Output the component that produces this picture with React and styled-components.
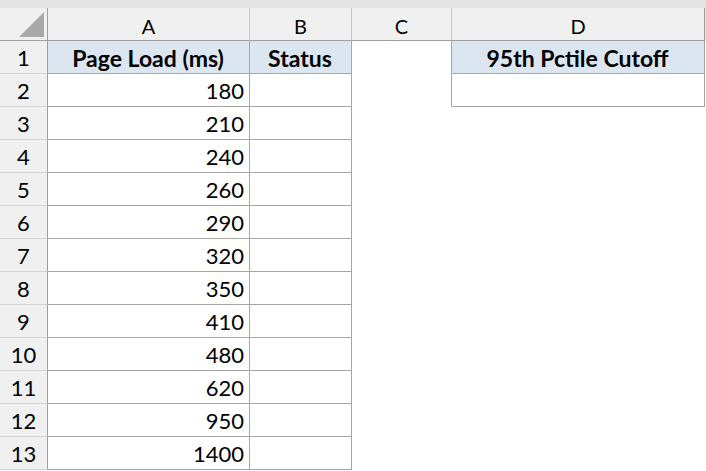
import React from 'react';
import styled, { createGlobalStyle } from 'styled-components';

const GlobalStyle = createGlobalStyle`
  html, body {
    margin: 0;
    padding: 0;
    background: #ffffff;
    overflow: hidden;
  }
  body {
    font-family: Lato, "Noto Sans", sans-serif;
    color: #000000;
  }
`

const loads = [180, 210, 240, 260, 290, 320, 350, 410, 480, 620, 950, 1400]
const columns = ['A', 'B', 'C', 'D']

const Page = styled.div`
  width: 706px;
  height: 471px;
  background: #ffffff;
`

const TopStrip = styled.div`
  height: 8px;
  background: #e3e3e3;
`

const Sheet = styled.div`
  display: grid;
  grid-template-columns: 48px 202px 102px 100px 253px 1px;
  grid-template-rows: 33px repeat(13, 33px);
`

const Corner = styled.div`
  position: relative;
  box-sizing: border-box;
  background: #f0f0f0;
  border-right: 1px solid #9f9f9f;
  border-bottom: 1px solid #9f9f9f;

  svg {
    position: absolute;
    left: 19px;
    top: 4px;
  }
`

const ColHeader = styled.div`
  box-sizing: border-box;
  background: #f0f0f0;
  border-right: 1px solid ${p => (p.$last ? '#9f9f9f' : '#c9c9c9')};
  border-bottom: 1px solid #9f9f9f;
  display: flex;
  align-items: center;
  justify-content: center;
  padding-top: 3px;
  font-size: 20px;
`

const Filler = styled.div`
  background: ${p => (p.$head ? '#e3e3e3' : '#ffffff')};
`

const RowHeader = styled.div`
  box-sizing: border-box;
  background: #f0f0f0;
  border-right: 1px solid #9f9f9f;
  border-bottom: 1px solid #d4d4d4;
  display: flex;
  align-items: center;
  justify-content: center;
  padding-top: 1px;
  font-size: 22px;
`

const Cell = styled.div`
  box-sizing: border-box;
  background: ${p => (p.$head ? '#dce6f1' : '#ffffff')};
  border-right: 1px solid ${p => (p.$right ? '#a6a6a6' : 'transparent')};
  border-bottom: 1px solid ${p => (p.$bottom ? '#a6a6a6' : 'transparent')};
  display: flex;
  align-items: center;
  justify-content: ${p => (p.$head ? 'center' : 'flex-end')};
  padding: 1px 5px 0 4px;
  font-size: ${p => (p.$head ? '23px' : '22px')};
  font-weight: ${p => (p.$head ? 700 : 400)};
  white-space: nowrap;
`

const Triangle = () => (
  <svg width="25" height="25" viewBox="0 0 25 25">
    <polygon points="25,0 25,25 0,25" fill="#a9a9a9" />
  </svg>
)

const App = () => {
  return (
    <Page>
      <GlobalStyle />
      <TopStrip />
      <Sheet>
        <Corner>
          <Triangle />
        </Corner>
        {columns.map((c, i) => (
          <ColHeader key={c} $last={i === columns.length - 1}>{c}</ColHeader>
        ))}
        <Filler $head />

        <RowHeader>1</RowHeader>
        <Cell $head $right $bottom>Page Load (ms)</Cell>
        <Cell $head $right $bottom>Status</Cell>
        <Cell $right />
        <Cell $head $right $bottom>95th Pctile Cutoff</Cell>
        <Filler />

        {loads.map((value, i) => (
          <React.Fragment key={value}>
            <RowHeader>{i + 2}</RowHeader>
            <Cell $right $bottom>{value}</Cell>
            <Cell $right $bottom />
            <Cell $right={i === 0} />
            <Cell $right={i === 0} $bottom={i === 0} />
            <Filler />
          </React.Fragment>
        ))}
      </Sheet>
    </Page>
  );
};

export default App;
